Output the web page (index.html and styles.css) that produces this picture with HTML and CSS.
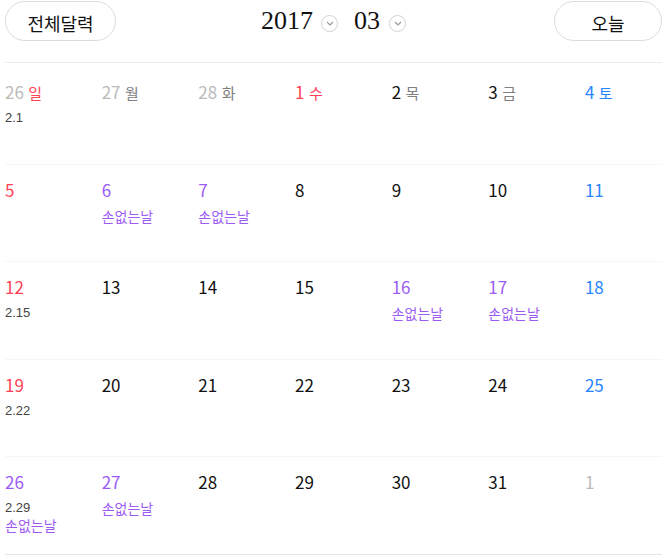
FILE: index.html
```html
<!DOCTYPE html>
<html lang="ko">
<head>
    <meta charset="UTF-8">
    <meta name="viewport" content="width=device-width, initial-scale=1.0">
    <title>달력</title>
    <link rel="stylesheet" href="styles.css">
</head>
<body>
    <div class="calendar">
        <div class="cal-head">
            <button class="pill">전체달력</button>
            <div class="title">
                <span class="year">2017</span>
                <span class="drop"><svg width="8" height="5" viewBox="0 0 8 5"><path d="M1 1 L4 4 L7 1" fill="none" stroke="#999" stroke-width="1.2"/></svg></span>
                <span class="month">03</span>
                <span class="drop"><svg width="8" height="5" viewBox="0 0 8 5"><path d="M1 1 L4 4 L7 1" fill="none" stroke="#999" stroke-width="1.2"/></svg></span>
            </div>
            <button class="pill today">오늘</button>
        </div>

        <div class="week first">
            <div class="day"><span class="num muted">26</span> <span class="wd red">일</span><div class="sub">2.1</div></div>
            <div class="day"><span class="num muted">27</span> <span class="wd">월</span></div>
            <div class="day"><span class="num muted">28</span> <span class="wd">화</span></div>
            <div class="day"><span class="num red">1</span> <span class="wd red">수</span></div>
            <div class="day"><span class="num">2</span> <span class="wd">목</span></div>
            <div class="day"><span class="num">3</span> <span class="wd">금</span></div>
            <div class="day"><span class="num blue">4</span> <span class="wd blue">토</span></div>
        </div>

        <div class="week">
            <div class="day"><span class="num red">5</span></div>
            <div class="day"><span class="num purple">6</span><div class="sub lucky">손없는날</div></div>
            <div class="day"><span class="num purple">7</span><div class="sub lucky">손없는날</div></div>
            <div class="day"><span class="num">8</span></div>
            <div class="day"><span class="num">9</span></div>
            <div class="day"><span class="num">10</span></div>
            <div class="day"><span class="num blue">11</span></div>
        </div>

        <div class="week">
            <div class="day"><span class="num red">12</span><div class="sub">2.15</div></div>
            <div class="day"><span class="num">13</span></div>
            <div class="day"><span class="num">14</span></div>
            <div class="day"><span class="num">15</span></div>
            <div class="day"><span class="num purple">16</span><div class="sub lucky">손없는날</div></div>
            <div class="day"><span class="num purple">17</span><div class="sub lucky">손없는날</div></div>
            <div class="day"><span class="num blue">18</span></div>
        </div>

        <div class="week">
            <div class="day"><span class="num red">19</span><div class="sub">2.22</div></div>
            <div class="day"><span class="num">20</span></div>
            <div class="day"><span class="num">21</span></div>
            <div class="day"><span class="num">22</span></div>
            <div class="day"><span class="num">23</span></div>
            <div class="day"><span class="num">24</span></div>
            <div class="day"><span class="num blue">25</span></div>
        </div>

        <div class="week last">
            <div class="day"><span class="num purple">26</span><div class="sub">2.29</div><div class="sub lucky tight">손없는날</div></div>
            <div class="day"><span class="num purple">27</span><div class="sub lucky">손없는날</div></div>
            <div class="day"><span class="num">28</span></div>
            <div class="day"><span class="num">29</span></div>
            <div class="day"><span class="num">30</span></div>
            <div class="day"><span class="num">31</span></div>
            <div class="day"><span class="num muted">1</span></div>
        </div>
    </div>
</body>
</html>
```

FILE: styles.css
```css
body {
    margin: 0;
    font-family: "Noto Sans CJK KR", "Noto Sans", sans-serif;
    color: #111;
    background: #fff;
    overflow: hidden;
}
.calendar {
    width: 657px;
    margin-left: 5px;
}
.cal-head {
    display: grid;
    grid-template-columns: 1fr auto 1fr;
    align-items: start;
    height: 61px;
    padding-top: 1px;
    border-bottom: 1px solid #ececec;
}
.pill {
    width: 111px;
    height: 40px;
    border: 1.5px solid #dcdcdc;
    border-radius: 20px;
    background: #fff;
    font-family: inherit;
    font-size: 18px;
    color: #111;
    padding: 3px 0 0;
}
.pill.today {
    width: 108px;
    justify-self: end;
}
.title {
    display: flex;
    align-items: center;
    height: 40px;
    font-family: "Liberation Serif", serif;
    font-size: 26px;
    line-height: 40px;
}
.drop {
    width: 17px;
    height: 17px;
    margin-top: 5px;
    border: 1px solid #d2d2d2;
    border-radius: 50%;
    display: flex;
    align-items: center;
    justify-content: center;
    box-sizing: border-box;
}
.year { margin-right: 8px; }
.month { margin: 0 9px 0 16px; }

.week {
    display: grid;
    grid-template-columns: repeat(6, 96.67px) 1fr;
    height: 96.5px;
    border-bottom: 1px solid #f6f6f6;
}
.week.first {
    margin-top: 4px;
}
.week.last {
    border-bottom-color: #e6e6e6;
}
.day {
    padding-top: 13px;
}
.num {
    font-size: 17px;
    line-height: 20px;
}
.wd {
    font-size: 15px;
    line-height: 20px;
    color: #808080;
}
.sub {
    margin-top: 6px;
    font-family: "Liberation Sans", sans-serif;
    font-size: 13px;
    line-height: 16px;
    color: #444;
}
.sub.lucky {
    font-family: "Noto Sans CJK KR", sans-serif;
    font-size: 14px;
    line-height: 17px;
    color: #9c5cf4;
}
.sub.tight { margin-top: 1px; }

.muted { color: #bbb; }
.red { color: #ff4257; }
.blue { color: #2a85ff; }
.purple { color: #9c5cf4; }
```
